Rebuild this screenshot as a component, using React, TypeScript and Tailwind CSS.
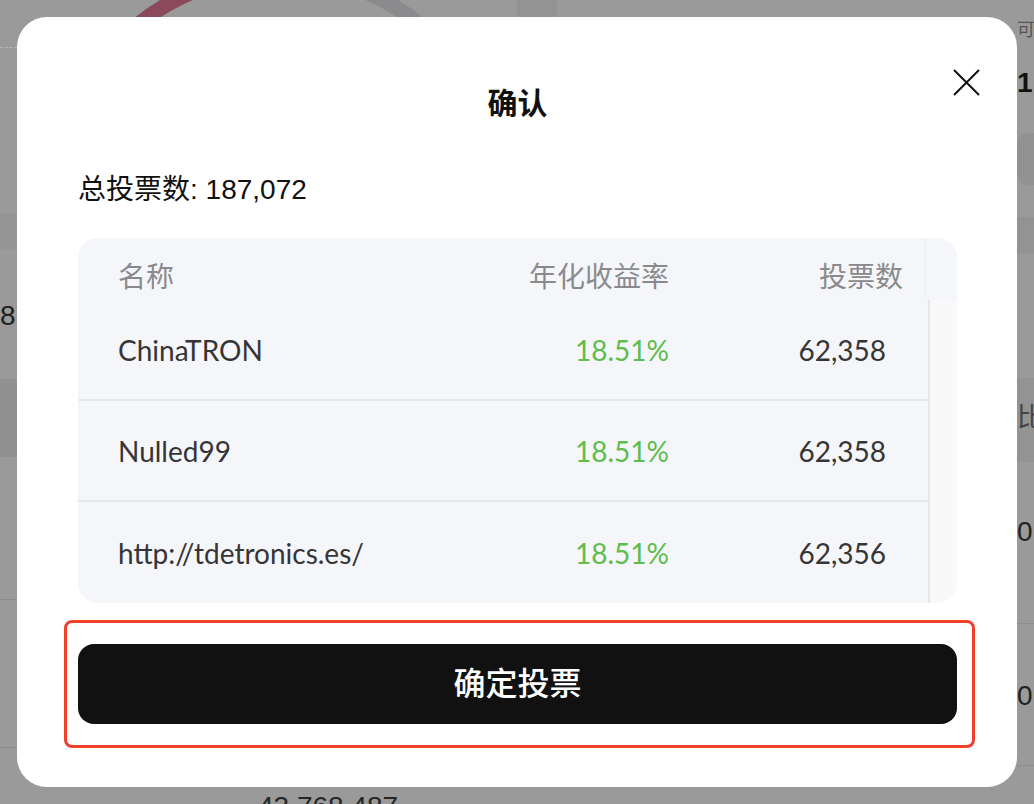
import React from 'react'

const rows = [
  { name: 'ChinaTRON', apy: '18.51%', votes: '62,358' },
  { name: 'Nulled99', apy: '18.51%', votes: '62,358' },
  { name: 'http://tdetronics.es/', apy: '18.51%', votes: '62,356' },
]

const cjk = "font-['Liberation_Sans','Noto_Sans_CJK_SC',sans-serif]"
const lato = "font-['Lato','Noto_Sans_CJK_SC',sans-serif]"

export default function App() {
  return (
    <div className={`relative h-[804px] w-full overflow-hidden bg-[#9a9a9a] ${cjk}`}>
      {/* dimmed page behind the dialog */}
      <div className="flex h-full">
        <div className="flex w-[17px] flex-col overflow-hidden">
          <div className="h-[47px]" />
          <div className="h-px border-t border-dashed border-[#b4b4b4]" />
          <div className="h-[165px]" />
          <div className="h-[36px] bg-[#959595]" />
          <div className="h-[52px]" />
          <div className="h-[30px] whitespace-nowrap text-[28px] leading-[30px] text-[#1e1e1e]">87</div>
          <div className="h-[48px]" />
          <div className="h-[78px] bg-[#919191]" />
          <div className="h-[142px]" />
          <div className="h-px bg-[#8c8c8c]" />
          <div className="h-[147px]" />
          <div className="h-px bg-[#8c8c8c]" />
        </div>

        <div className="flex flex-1 flex-col overflow-hidden">
          <div className="flex h-[17px] overflow-hidden">
            <svg width="1000" height="17" viewBox="17 0 1000 17" className="shrink-0">
              <path d="M 55 199 A 224 224 0 0 1 240 -22" fill="none" stroke="#8a4a5c" strokeWidth="15" />
              <path d="M 318 -22 A 224 224 0 0 1 503 199" fill="none" stroke="#8b8b8e" strokeWidth="15" />
              <rect x="517" y="0" width="40" height="17" fill="#939394" />
            </svg>
          </div>
          <div className="mt-auto h-[17px] overflow-hidden pl-[241px] text-[28px] leading-[40px] text-[#262626]">
            43,768,487
          </div>
        </div>

        <div className="flex w-[17px] flex-col overflow-hidden">
          <div className="h-[20px]" />
          <div className="h-[20px] whitespace-nowrap text-[18px] leading-[20px] text-[#555]">可用</div>
          <div className="h-[28px]" />
          <div className="h-[30px] whitespace-nowrap text-[28px] font-bold leading-[30px] text-[#111]">1</div>
          <div className="h-[35px]" />
          <div className="h-[52px] rounded-l-[10px] bg-[#929292]" />
          <div className="h-[32px]" />
          <div className="h-[36px] bg-[#939393]" />
          <div className="h-[125px]" />
          <div className="h-[84px] bg-[#939393] pt-[22px] text-[26px] leading-[34px] text-[#444]">比</div>
          <div className="h-[50px]" />
          <div className="h-[40px] whitespace-nowrap text-[28px] leading-[40px] text-[#222]">0</div>
          <div className="h-[72px] border-b border-[#8d8d8d]" />
          <div className="h-[52px]" />
          <div className="h-[40px] whitespace-nowrap text-[28px] leading-[40px] text-[#222]">0</div>
          <div className="h-[50px] border-b border-[#8d8d8d]" />
        </div>
      </div>

      {/* dialog */}
      <div className="absolute inset-0 p-[17px]">
        <div className="relative flex h-full flex-col rounded-[30px] bg-white pl-[61px] pr-[60px]">
          <button className="absolute left-[936px] top-[52px] h-[27px] w-[27px]">
            <svg width="27" height="27" viewBox="0 0 27 27">
              <path d="M1 1 L26 26 M26 1 L1 26" stroke="#111" strokeWidth="2" />
            </svg>
          </button>

          <h2 className="pt-[67px] text-center text-[30px] font-bold leading-[40px] text-[#111]">确认</h2>

          <p className="mt-[48px] text-[28px] leading-[36px] text-[#111]">总投票数: 187,072</p>

          <div className="mt-[30px] flex h-[365px] flex-col overflow-hidden rounded-[20px] bg-[#f5f6fa]">
            <div className="flex h-[62px] shrink-0">
              <div className="flex flex-1 items-start pl-[40px] pr-[22px] pt-[24px] text-[28px] leading-[32px] text-[#8a8a8c]">
                <span className="flex-1">名称</span>
                <span className="w-[200px] text-right">年化收益率</span>
                <span className="w-[234px] text-right">投票数</span>
              </div>
              <div className="w-[32px] border-l border-[#eceef2]" />
            </div>
            <div className="flex flex-1">
              <div className="flex-1">
                {rows.map((r, i) => (
                  <div
                    key={i}
                    className={`flex h-[101px] items-center pl-[40px] pr-[42px] text-[28px] ${lato} ${i < 2 ? 'border-b-2 border-[#e7e8ec]' : ''}`}
                  >
                    <span className="flex-1 text-[#353535]">{r.name}</span>
                    <span className="w-[200px] text-right text-[#5ebd4b]">{r.apy}</span>
                    <span className="w-[217px] text-right text-[#353535]">{r.votes}</span>
                  </div>
                ))}
              </div>
              <div className="w-[29px] border-l-2 border-[#e6e6e8] bg-[#f9f9f9]" />
            </div>
          </div>

          <div className="ml-[-14px] mr-[-18px] mt-[17px] rounded-[8px] border-[3px] border-[#ee4129] pb-[21px] pl-[11px] pr-[15px] pt-[21px]">
            <button className="flex h-[80px] w-full items-center justify-center rounded-[16px] bg-[#111] text-[32px] font-medium text-white">
              确定投票
            </button>
          </div>
        </div>
      </div>
    </div>
  )
}
